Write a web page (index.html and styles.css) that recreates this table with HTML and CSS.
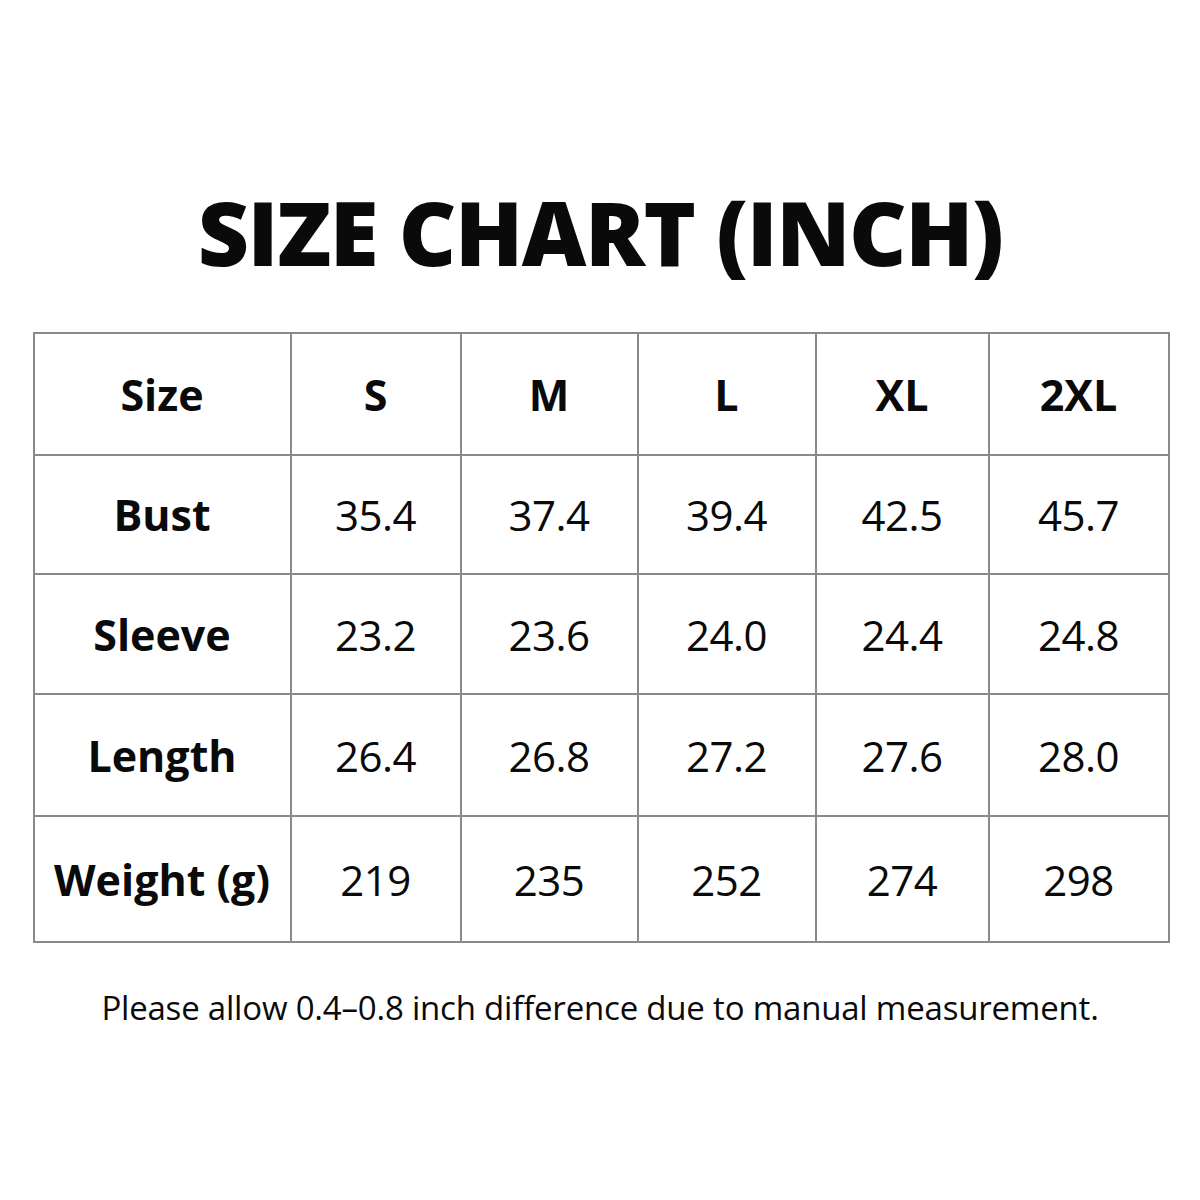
FILE: index.html
```html
<!DOCTYPE html>
<html>
<head>
<meta charset="utf-8">
<link rel="stylesheet" href="styles.css">
</head>
<body>
<div class="page">
  <h1 class="title">SIZE CHART (INCH)</h1>
  <table class="chart">
    <colgroup>
      <col class="c0"><col class="c1"><col class="c2"><col class="c3"><col class="c4"><col class="c5">
    </colgroup>
    <tr class="r0"><th>Size</th><th>S</th><th>M</th><th>L</th><th>XL</th><th>2XL</th></tr>
    <tr class="r1"><th>Bust</th><td>35.4</td><td>37.4</td><td>39.4</td><td>42.5</td><td>45.7</td></tr>
    <tr class="r2"><th>Sleeve</th><td>23.2</td><td>23.6</td><td>24.0</td><td>24.4</td><td>24.8</td></tr>
    <tr class="r3"><th>Length</th><td>26.4</td><td>26.8</td><td>27.2</td><td>27.6</td><td>28.0</td></tr>
    <tr class="r4"><th>Weight (g)</th><td>219</td><td>235</td><td>252</td><td>274</td><td>298</td></tr>
  </table>
  <p class="note">Please allow 0.4–0.8 inch difference due to manual measurement.</p>
</div>
</body>
</html>
```
FILE: styles.css
```css
html, body {
  margin: 0;
  padding: 0;
  background: #ffffff;
}
.page {
  width: 1200px;
  height: 1200px;
  font-family: "Open Sans", "Noto Sans", sans-serif;
  color: #0a0a0a;
  display: flex;
  flex-direction: column;
  align-items: center;
  padding-top: 182px;
  box-sizing: border-box;
}
.title {
  margin: 0;
  font-size: 89px;
  font-weight: 800;
  line-height: 100px;
  letter-spacing: -1.5px;
}
.chart {
  margin-top: 50px;
  border-collapse: collapse;
  table-layout: fixed;
  width: 1136px;
  margin-left: 2px;
}
.chart th, .chart td {
  border: 2px solid #8a8a8a;
  text-align: center;
  vertical-align: middle;
  padding: 0;
}
.chart th {
  font-weight: 700;
  font-size: 43px;
}
.chart td {
  font-weight: 400;
  font-size: 42px;
  letter-spacing: -0.5px;
}
.c0 { width: 257px; }
.c1 { width: 170px; }
.c2 { width: 177px; }
.c3 { width: 178px; }
.c4 { width: 173px; }
.c5 { width: 180px; }
.r0 { height: 122px; }
.r1 { height: 119px; }
.r2 { height: 120px; }
.r3 { height: 122px; }
.r4 { height: 126px; }
.note {
  margin: 42px 0 0;
  font-size: 33px;
  line-height: 46px;
  font-weight: 400;
  letter-spacing: -0.2px;
}
```
